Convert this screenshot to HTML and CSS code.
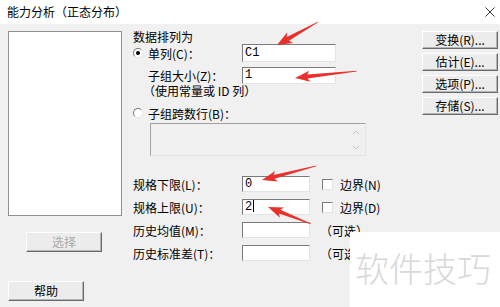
FILE: index.html
```html
<!DOCTYPE html>
<html lang="zh-CN">
<head>
    <meta charset="UTF-8">
    <meta name="viewport" content="width=device-width, initial-scale=1.0">
    <title>能力分析（正态分布）</title>
    <link rel="stylesheet" href="styles.css">
</head>
<body>
    <div class="window">
        <header class="titlebar">
            <span class="title">能力分析（正态分布）</span>
            <svg class="close" viewBox="0 0 10 10">
                <path d="M0.5 0.5 L9.5 9.5 M9.5 0.5 L0.5 9.5" stroke="#333" stroke-width="1"/>
            </svg>
        </header>

        <div class="dialog">
            <div class="left-col">
                <div class="listbox"></div>
                <button class="btn btn-select" disabled>选择</button>
                <button class="btn btn-help">帮助</button>
            </div>

            <div class="main-col">
                <div class="group-title">数据排列为</div>

                <div class="row row-single">
                    <div class="label-col"><span class="radio checked"></span>单列(C)：</div>
                    <div class="field field-wide">C1</div>
                </div>
                <div class="row row-size">
                    <div class="label-col indent">子组大小(Z)：</div>
                    <div class="field field-wide">1</div>
                </div>
                <div class="note">（使用常量或 ID 列）</div>

                <div class="row row-multi">
                    <div class="label-col"><span class="radio"></span>子组跨数行(B)：</div>
                </div>
                <div class="textarea">
                    <svg class="scroll" viewBox="0 0 8 22">
                        <path d="M1 5 L4 2 L7 5 M1 17 L4 20 L7 17" fill="none" stroke="#c4c4c4" stroke-width="1"/>
                    </svg>
                </div>

                <div class="spec-list">
                    <div class="row spec-row">
                        <div class="label-col">规格下限(L)：</div>
                        <div class="field field-narrow">0</div>
                        <span class="check"></span>
                        <span class="check-label">边界(N)</span>
                    </div>
                    <div class="row spec-row">
                        <div class="label-col">规格上限(U)：</div>
                        <div class="field field-narrow">2<span class="caret"></span></div>
                        <span class="check"></span>
                        <span class="check-label">边界(D)</span>
                    </div>
                    <div class="row spec-row">
                        <div class="label-col">历史均值(M)：</div>
                        <div class="field field-narrow"></div>
                        <span class="optional">（可选）</span>
                    </div>
                    <div class="row spec-row">
                        <div class="label-col">历史标准差(T)：</div>
                        <div class="field field-narrow"></div>
                        <span class="optional">（可选）</span>
                    </div>
                </div>
            </div>

            <div class="side-col">
                <button class="btn">变换(R)...</button>
                <button class="btn">估计(E)...</button>
                <button class="btn">选项(P)...</button>
                <button class="btn">存储(S)...</button>
            </div>
        </div>

        <!-- red arrows drawn over the screenshot -->
        <svg class="arrows" viewBox="0 0 500 307">
            <g fill="#e8312c">
                <polygon transform="translate(277 45) rotate(-29.3)" points="0,0 15,-6 12.5,-2.2 47,-0.4 47,0.4 12.5,2.2 15,6"/>
                <polygon transform="translate(295 78) rotate(-6.4)" points="0,0 15,-5.5 12.5,-2 62,-0.4 62,0.4 12.5,2 15,5.5"/>
                <polygon transform="translate(262 180) rotate(-14.5)" points="0,0 15,-5.5 12.5,-2 56,-0.4 56,0.4 12.5,2 15,5.5"/>
                <polygon transform="translate(268 207) rotate(21.6)" points="0,0 15,-5.5 12.5,-2 46,-0.4 46,0.4 12.5,2 15,5.5"/>
            </g>
        </svg>

        <div class="watermark">软件技巧</div>
    </div>
</body>
</html>
```

FILE: styles.css
```css
* {
    box-sizing: border-box;
}

body {
    margin: 0;
    font-family: "Noto Sans CJK SC", sans-serif;
    font-size: 12px;
    color: #000;
    background-color: #f0f0f0;
}

.window {
    position: relative;
    width: 500px;
    height: 307px;
    overflow: hidden;
    background-color: #f0f0f0;
}

.titlebar {
    height: 24px;
    background-color: #fff;
    display: flex;
    align-items: center;
    justify-content: space-between;
    padding: 0 5px 0 7px;
}

.title {
    font-size: 12px;
    line-height: 14px;
}

.close {
    width: 10px;
    height: 10px;
}

.dialog {
    display: flex;
    padding: 7px 0 0 8px;
    height: 283px;
}

/* left column */
.left-col {
    width: 114px;
    display: flex;
    flex-direction: column;
    align-items: flex-start;
}

.listbox {
    width: 114px;
    height: 185px;
    background-color: #fff;
    border: 1px solid #8f8f8f;
}

.btn {
    width: 76px;
    height: 20px;
    padding: 0;
    font: inherit;
    font-size: 12px;
    line-height: 16px;
    color: #000;
    background-color: #ececec;
    border: 1px solid;
    border-color: #fff #696969 #696969 #fff;
    box-shadow: inset -1px -1px 0 #b5b5b5;
}

.btn-select {
    margin: 16px 0 0 18px;
    color: #a8a8a8;
}

.btn-help {
    margin-top: 29px;
}

/* middle column */
.main-col {
    width: 280px;
    margin-left: 10px;
}

.group-title {
    height: 13px;
    line-height: 12px;
    padding-left: 1px;
}

.row {
    display: flex;
    align-items: center;
}

.label-col {
    width: 110px;
    display: flex;
    align-items: center;
    padding-left: 1px;
    white-space: nowrap;
}

.label-col.indent {
    padding-left: 16px;
}

.row-single {
    height: 18px;
    margin-top: 0;
}

.row-size {
    height: 17px;
    margin-top: 5px;
}

.note {
    height: 13px;
    line-height: 13px;
    padding-left: 11px;
}

.row-multi {
    height: 14px;
    margin-top: 9px;
}

.radio {
    position: relative;
    width: 10px;
    height: 10px;
    margin-right: 5px;
    border-radius: 50%;
    background-color: #fff;
    border: 1px solid;
    border-color: #7a7a7a #e6e6e6 #e6e6e6 #7a7a7a;
}

.radio.checked::after {
    content: "";
    position: absolute;
    left: 2px;
    top: 2px;
    width: 4px;
    height: 4px;
    border-radius: 50%;
    background-color: #000;
}

.field {
    height: 16px;
    line-height: 14px;
    padding-left: 2px;
    background-color: #fff;
    border: 1px solid;
    border-color: #7a7a7a #e4e4e4 #e4e4e4 #7a7a7a;
    font-family: "Liberation Mono", "Noto Sans CJK SC", monospace;
    font-size: 12px;
}

.field-wide {
    width: 94px;
}

.row-single .field {
    height: 18px;
    line-height: 16px;
}

.row-size .field {
    height: 17px;
    line-height: 15px;
}

.field-narrow {
    width: 68px;
}

.caret {
    display: inline-block;
    width: 1px;
    height: 12px;
    margin-left: 1px;
    vertical-align: -2px;
    background-color: #000;
}

.textarea {
    position: relative;
    width: 216px;
    height: 33px;
    margin: 3px 0 0 18px;
    background-color: #f0f0f0;
    border: 1px solid;
    border-color: #a0a0a0 #e4e4e4 #e4e4e4 #a0a0a0;
}

.scroll {
    position: absolute;
    right: 5px;
    top: 5px;
    width: 8px;
    height: 22px;
}

.spec-list {
    margin-top: 19px;
    display: flex;
    flex-direction: column;
    gap: 5px;
}

.spec-row {
    height: 18px;
}

.check {
    width: 11px;
    height: 11px;
    margin-left: 12px;
    background-color: #fff;
    border: 1px solid;
    border-color: #7a7a7a #e4e4e4 #e4e4e4 #7a7a7a;
}

.check-label {
    margin-left: 7px;
}

.optional {
    margin-left: 10px;
}

/* right column */
.side-col {
    margin-left: 10px;
    display: flex;
    flex-direction: column;
    gap: 4px;
}

.side-col .btn {
    height: 18px;
    line-height: 14px;
}

/* overlays */
.arrows {
    position: absolute;
    left: 0;
    top: 0;
    width: 500px;
    height: 307px;
    pointer-events: none;
}

.watermark {
    position: absolute;
    left: 350px;
    top: 232px;
    width: 150px;
    height: 75px;
    background-color: #fff;
    color: #d8d8d8;
    font-size: 34px;
    font-weight: 300;
    line-height: 34px;
    padding: 19px 0 0 5px;
    white-space: nowrap;
}
```
